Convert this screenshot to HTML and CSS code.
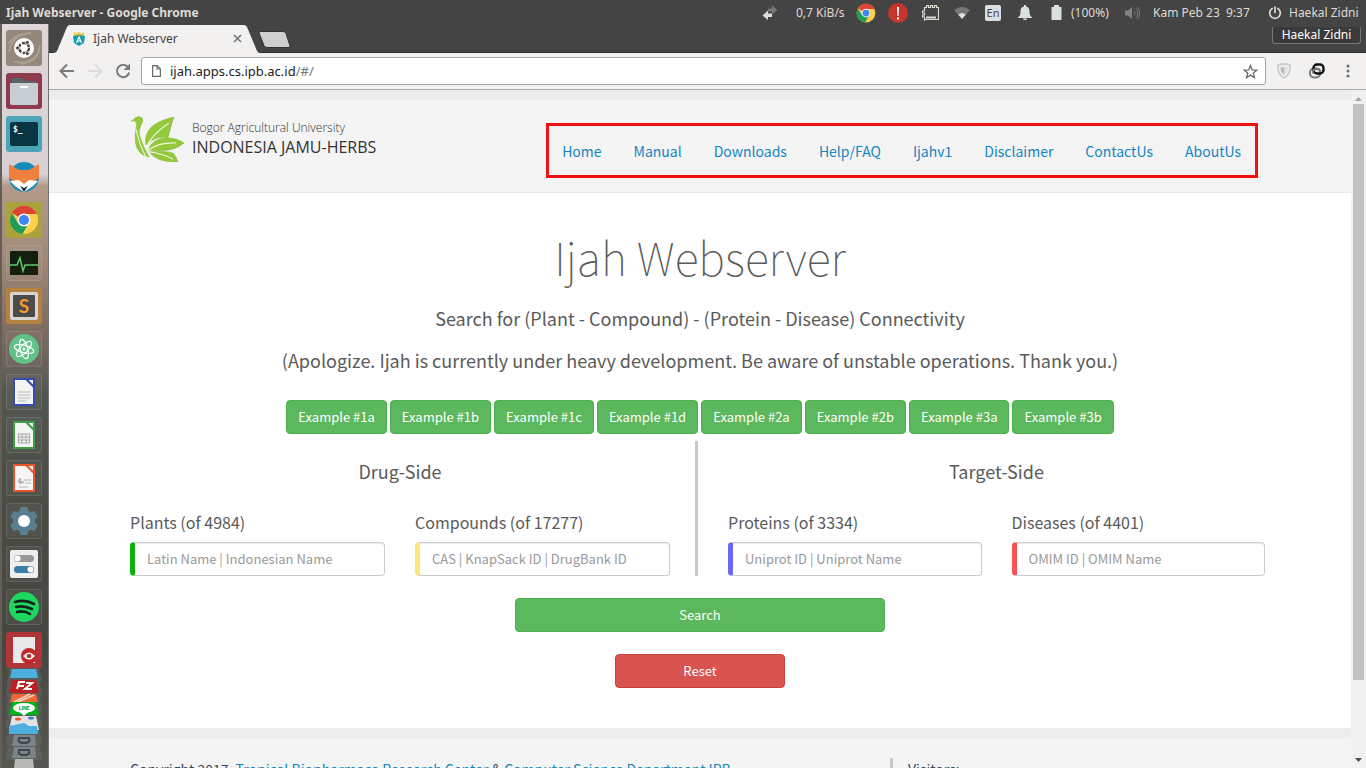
FILE: index.html
```html
<!DOCTYPE html>
<html lang="en">
<head>
<meta charset="utf-8">
<title>Ijah Webserver</title>
<link rel="stylesheet" href="styles.css">
</head>
<body>
<svg class="defs" width="0" height="0" aria-hidden="true">
  <symbol id="chrome" viewBox="0 0 32 32">
    <circle cx="16" cy="16" r="15" fill="#fdd04b"/>
    <path d="M16 16 3 8.500A15 15 0 0 1 29.500 9.500H16z" fill="#db4437"/>
    <path d="M3 8.500A15 15 0 0 0 14.500 31L20 21 16 16 9.500 19z" fill="#1f9d58"/>
    <path d="M3 8.500 16 9.500H29.500A15 15 0 0 0 3 8.500z" fill="#db4437"/>
    <circle cx="16" cy="16" r="7" fill="#f3f3f3"/>
    <circle cx="16" cy="16" r="5.400" fill="#4285f4"/>
  </symbol>
</svg>
<div class="desktop">
  <header class="panel">
    <span class="panel-title">Ijah Webserver - Google Chrome</span>
    <div class="indicators">
      <svg class="ind-net" width="16" height="16" viewBox="0 0 16 16"><path d="M6 3.500h4V.5L15.500 5 10 9.500v-3H6z" fill="#777672"/><path d="M10 8.500H6v-3L.5 10.500 6 15v-3h4z" fill="#dadfe1"/></svg>
      <span class="ind-speed">0,7 KiB/s</span>
      <svg class="ind-chrome" width="20" height="20"><use href="#chrome"/></svg>
      <svg class="ind-alert" width="20" height="20" viewBox="0 0 20 20"><circle cx="10" cy="10" r="10" fill="#c6352d"/><path d="M9 4h2l-.4 9H9.400zM9 14.500h2v2H9z" fill="#fff"/></svg>
      <svg class="ind-note" width="17" height="17" viewBox="0 0 17 17" fill="none" stroke="#dfdbd2"><path d="M2.500 16v-3H.5v-2h2V9H.5V7h2V3.500h2v-2h2v2h2v-2h2v2h2v-2h2v2h2V15.500h-13z" stroke-width="1.200"/><path d="M4 13.500h10" stroke-width="2"/></svg>
      <svg class="ind-wifi" width="16" height="12" viewBox="0 0 16 12"><path d="M0 3Q8-3 16 3L8 12z" fill="#777672"/><path d="M4.200 7.500Q8 4.500 11.800 7.500L8 12z" fill="#dadfe1"/></svg>
      <span class="ind-lang">En</span>
      <svg class="ind-bell" width="14" height="15" viewBox="0 0 14 15" fill="#dadfe1"><path d="M6 0h2v1.500c3 .5 3.500 3 3.500 5 0 3 .5 4 2.500 6v.5H0v-.5c2-2 2.500-3 2.500-6 0-2 .5-4.500 3.500-5zM5 13.500h4c0 2-4 2-4 0z"/></svg>
      <svg class="ind-battery" width="11" height="15" viewBox="0 0 11 15" fill="#dadfe1"><path d="M3 0h5v2h2.500v13H.5V2H3z"/></svg>
      <span class="ind-percent">(100%)</span>
      <svg class="ind-volume" width="15" height="14" viewBox="0 0 15 14"><path d="M0 4.500h3L7 1v12L3 9.500H0z" fill="#85837f"/><path d="M9 4.500q2 2.500 0 5M11 2.500q3.500 4.500 0 9M12.500.8q4 6 0 12.400" fill="none" stroke="#777672"/></svg>
      <time class="ind-date">Kam Peb 23&nbsp; 9:37</time>
      <svg class="ind-power" width="14" height="14" viewBox="0 0 14 14" fill="none" stroke="#dfdbd2" stroke-width="1.700" stroke-linecap="round"><path d="M4.200 2.500a5.300 5.300 0 1 0 5.600 0M7 1v5.500"/></svg>
      <span class="ind-user">Haekal Zidni</span>
    </div>
  </header>

  <aside class="launcher" aria-label="Launcher">
    <div class="tile tile-dash"><svg viewBox="0 0 36 36"><path d="M3 22Q6 4 25 3M8 32Q32 35 34 15M2 14Q10 4 18 4M14 34Q28 32 31 25" fill="none" stroke="#aa9d91" stroke-width="2"/><circle cx="18" cy="18" r="10" fill="#fff"/><circle cx="18" cy="18" r="5" fill="none" stroke="#51453f" stroke-width="2.400" stroke-dasharray="9 1.470"/><g fill="#51453f" stroke="#fff" stroke-width=".8"><circle cx="11.500" cy="18" r="2"/><circle cx="21.300" cy="12.400" r="2"/><circle cx="21.300" cy="23.600" r="2"/></g></svg></div>
    <div class="tile tile-files"><svg viewBox="0 0 36 36"><path d="M6 10V6q0-1 1-1h8l4 3h9q2 0 2 2v4H6z" fill="#56666b"/><path d="M4 11q0-1 1-1h26q1 0 1 1v19q0 2-2 2H6q-2 0-2-2z" fill="#c7cdd0"/><path d="M14 13h8v2h-8z" fill="#fff"/></svg></div>
    <div class="tile tile-terminal"><svg viewBox="0 0 36 36"><rect x="4" y="6" width="28" height="24" rx="2" fill="#073642"/><text x="7" y="16" class="term-text">$_</text></svg></div>
    <div class="tile"><svg viewBox="0 0 36 36"><circle cx="18" cy="18" r="15" fill="#178bbb"/><path d="M3 5l10 6h10l10-6 0 14-4 2 2 1-4 2-9 9-9-9-4-2 2-1-4-2z" fill="#f07f3c"/><path d="M4 22l9-1 5 4 5-4 9 1-5 5-9 6-9-6z" fill="#fff"/><path d="M14 27l4 2 4-2-4 6z" fill="#252b38"/></svg></div>
    <div class="tile tile-chrome"><svg viewBox="0 0 36 36"><use href="#chrome" x="3" y="3" width="30" height="30"/></svg></div>
    <div class="tile framed"><svg viewBox="0 0 36 36"><rect x="4" y="6" width="28" height="24" rx="1" fill="#14200f"/><path d="M4 20h7l3-7 3 13 2-6h13" fill="none" stroke="#62c56d" stroke-width="1.500"/></svg></div>
    <div class="tile tile-sublime"><svg viewBox="0 0 36 36"><rect x="4" y="4" width="28" height="28" rx="2" fill="#d7d5d1"/><rect x="7" y="7" width="22" height="22" rx="1" fill="#4b4b4b"/><text x="18" y="25" text-anchor="middle" class="sublime-text">S</text></svg></div>
    <div class="tile framed"><svg viewBox="0 0 36 36"><circle cx="18" cy="18" r="15" fill="#61c287"/><g fill="none" stroke="#fff" stroke-width="1.200"><ellipse cx="18" cy="18" rx="10" ry="3.800" transform="rotate(15 18 18)"/><ellipse cx="18" cy="18" rx="10" ry="3.800" transform="rotate(75 18 18)"/><ellipse cx="18" cy="18" rx="10" ry="3.800" transform="rotate(135 18 18)"/></g><circle cx="18" cy="18" r="1.500" fill="#fff"/></svg></div>
    <div class="tile framed"><svg viewBox="0 0 36 36"><path d="M8 5h20v26H8z" fill="#f4f4f4" stroke="#354bb2" stroke-width="2"/><path d="M20 5h8v8z" fill="#f4f4f4" stroke="#354bb2" stroke-width="2"/><path d="M12 18h12M12 21h12M12 24h12M12 27h8" stroke="#b8b8b8"/></svg></div>
    <div class="tile framed"><svg viewBox="0 0 36 36"><path d="M8 5h20v26H8z" fill="#f4f4f4" stroke="#3e9b46" stroke-width="2"/><path d="M20 5h8v8z" fill="#f4f4f4" stroke="#3e9b46" stroke-width="2"/><path d="M12.500 17h11v9h-11zM12.500 20h11M12.500 23h11M16 17v9M20 17v9" fill="none" stroke="#a8a8a8"/></svg></div>
    <div class="tile framed"><svg viewBox="0 0 36 36"><path d="M8 5h20v26H8z" fill="#f4f4f4" stroke="#e4572c" stroke-width="2"/><path d="M20 5h8v8z" fill="#f4f4f4" stroke="#e4572c" stroke-width="2"/><path d="M15 18a3 3 0 1 0 3 3h-3z" fill="#b8b8b8"/><path d="M18 20h7M19 23h6M13 27h9" stroke="#b8b8b8"/></svg></div>
    <div class="tile framed"><svg viewBox="0 0 36 36"><g fill="#5b7f91"><circle cx="18" cy="18" r="11"/><rect x="14" y="4" width="8" height="28" rx="1.500"/><rect x="14" y="4" width="8" height="28" rx="1.500" transform="rotate(60 18 18)"/><rect x="14" y="4" width="8" height="28" rx="1.500" transform="rotate(120 18 18)"/></g><circle cx="18" cy="18" r="6" fill="#fff"/></svg></div>
    <div class="tile framed"><svg viewBox="0 0 36 36"><rect x="4" y="4" width="28" height="28" rx="2" fill="#eee"/><rect x="8" y="9" width="20" height="7" rx="3.500" fill="#999"/><circle cx="11.500" cy="12.500" r="3" fill="#fff"/><rect x="8" y="20" width="20" height="7" rx="3.500" fill="#3a7ca5"/><circle cx="24.500" cy="23.500" r="3" fill="#fff"/></svg></div>
    <div class="tile framed"><svg viewBox="0 0 36 36"><circle cx="18" cy="18" r="15" fill="#1ed760"/><path d="M9 13q10-3 19 2M10 18q8-2 16 2M11 23q7-2 13 2" fill="none" stroke="#14241a" stroke-width="2.600" stroke-linecap="round"/></svg></div>
    <div class="tile tile-viewer"><svg viewBox="0 0 36 36"><path d="M7 5h22v26H7z" fill="#e9e9e9"/><circle cx="23" cy="24" r="8" fill="#c1272d"/><path d="M17 24q6-7 12 0-6 7-12 0z" fill="#fff"/><circle cx="23" cy="24" r="2.300" fill="#c1272d"/></svg></div>
    <svg class="folded" viewBox="0 0 36 101" preserveAspectRatio="xMidYMin slice">
      <path d="M3 0h30l3 12-2 4 2 10-2 4 2 12-2 4 2 12-2 4 2 12-2 4 2 14H0l2-14-2-4 2-12-2-4 2-12-2-4 2-12-2-4z" fill="#666b65" opacity=".5"/>
      <path d="M6 1h24l2 9H4z" fill="#4daee0"/>
      <path d="M6 12h24l3 13H3z" fill="#bd2024"/><path d="M11 21l2-7h6M12 18h6M20 15h6l-7 6h7" fill="none" stroke="#fff" stroke-width="2"/>
      <path d="M6 26h24l2 8H4z" fill="#ee6736"/><path d="M8 34l16-8M12 34l16-7" stroke="#f4d6c0" stroke-width="1.500"/>
      <path d="M6 34h24l3 13H3z" fill="#00b119"/><ellipse cx="18" cy="40" rx="11" ry="5" fill="#fff"/><path d="M14 44l4 4 4-4z" fill="#fff"/><text x="18" y="42" text-anchor="middle" class="line-text">LINE</text>
      <path d="M6 48h24l3 14H3z" fill="#e4e4e4"/><ellipse cx="12" cy="51" rx="3" ry="1.500" fill="#e8502c"/><ellipse cx="25" cy="50" rx="3" ry="1.500" fill="#3c7cc0"/><path d="M3 58l15-3 5 3h8l1 8H3z" fill="#4daee0"/>
      <path d="M8 67h21l1 11H6z" fill="#7d858a"/><path d="M13 70h10q2 5-5 5t-5-5z" fill="none" stroke="#3d444a" stroke-width="2"/>
      <path d="M8 79h21l1 11H6z" fill="#7d858a"/><path d="M13 82h10q2 5-5 5t-5-5z" fill="none" stroke="#3d444a" stroke-width="2"/>
      <path d="M9 91h18l1 10H8z" fill="#b9bab8"/>
    </svg>
  </aside>

  <section class="browser">
    <div class="tabstrip">
      <div class="tab">
        <svg class="tab-shape" width="211" height="29" viewBox="0 0 211 29" preserveAspectRatio="none" aria-hidden="true"><path d="M0 29h4q3 0 4-2L18 3q1-2 3-2h174q2 0 3 2l10 24q1 2 3 2z" fill="#f2f1f0"/></svg>
        <svg class="favicon" width="12" height="14" viewBox="0 0 12 14"><path d="M1 0l2.500 2L6 0l2.500 2L11 0v5H1z" fill="#f4c430"/><path d="M0 4l6-1 6 1-1 7-5 3-5-3z" fill="#169db0"/><path d="M3.500 11L6 5l2.500 6M4.500 9h3" fill="none" stroke="#fff" stroke-width="1.100"/></svg>
        <span class="tab-title">Ijah Webserver</span>
        <button class="tab-close" aria-label="Close tab"><svg width="9" height="9" viewBox="0 0 9 9"><path d="M1 1l7 7M8 1L1 8" stroke="#777" stroke-width="1.600"/></svg></button>
      </div>
      <button class="new-tab" aria-label="New tab"><svg width="33" height="17" viewBox="0 0 33 17"><path d="M2 .5h23q2 0 3 2L32 15q0 1.500-1 1.500H9q-2 0-3-2L1 2Q1 .5 2 .5z" fill="#cfcecd" stroke="#333"/></svg></button>
      <button class="profile">Haekal Zidni</button>
    </div>

    <div class="toolbar">
      <button aria-label="Back"><svg width="16" height="16" viewBox="0 0 16 16" fill="none" stroke="#7a7a7a" stroke-width="2"><path d="M15 8H2M8 1.500L1.500 8 8 14.500"/></svg></button>
      <button aria-label="Forward"><svg width="16" height="16" viewBox="0 0 16 16" fill="none" stroke="#dcdbda" stroke-width="2"><path d="M1 8h13M8 1.500L14.500 8 8 14.500"/></svg></button>
      <button aria-label="Reload"><svg width="16" height="16" viewBox="0 0 16 16"><path d="M13 4a6.200 6.200 0 1 0 1.200 5.500" fill="none" stroke="#7a7a7a" stroke-width="2"/><path d="M15 .5v6.500H8.500z" fill="#7a7a7a"/></svg></button>
      <div class="omnibox">
        <svg width="9" height="12" viewBox="0 0 9 12" fill="none" stroke="#6b6b6b" stroke-width="1.200"><path d="M.6.600h4.600L8.400 4v7.400H.6zM5 .6V4h3.400"/></svg>
        <p class="url">ijah.apps.cs.ipb.ac.id<span>/#/</span></p>
        <button aria-label="Bookmark"><svg width="15" height="15" viewBox="0 0 15 15" fill="none" stroke="#6b6b6b" stroke-width="1.300"><path d="M7.500 1.500l1.700 4.300 4.600.3-3.500 3 1.100 4.400-3.900-2.400-3.900 2.400 1.100-4.400-3.500-3 4.600-.3z"/></svg></button>
      </div>
      <div class="extensions">
        <button aria-label="Shield"><svg width="16" height="16" viewBox="0 0 16 16"><path d="M8 1q3.500 0 6 .8Q15 11 8 15 1 11 2 1.800 4.500 1 8 1z" fill="#eee" stroke="#c4c4c4" stroke-width="1.300"/><path d="M8 4q2 0 3.500.5Q11.500 9 8 12z" fill="#ddd"/><path d="M8 4q-2 0-3.500.5Q4.500 9 8 12z" fill="#bbb"/></svg></button>
        <button aria-label="Link"><svg width="17" height="16" viewBox="0 0 17 16" fill="none" stroke-width="2"><rect x="2" y="5.500" width="10" height="9" rx="4" stroke="#777"/><rect x="5.500" y="1.500" width="10" height="9" rx="3.500" stroke="#111" stroke-width="2.400"/><path d="M5 10.500V9q0-3 3-3h2q2 0 2 2.500" stroke="#777"/></svg></button>
        <button aria-label="Menu"><svg width="4" height="14" viewBox="0 0 4 14" fill="#6b6b6b"><circle cx="2" cy="2" r="1.500"/><circle cx="2" cy="7" r="1.500"/><circle cx="2" cy="12" r="1.500"/></svg></button>
      </div>
    </div>

    <div class="viewport">
      <div class="page">
        <header class="site-header">
          <div class="container header-row">
            <a class="brand" href="#/">
              <svg width="54" height="46" viewBox="0 0 54 46"><g fill="#93c93a" stroke="#7fb531" stroke-width=".5"><path d="M0 5q3-1 4-3 4-3 7 0 2 3-1 7-3 6-1 12 3 9 9 20-8-1-12-9-3-7-1-19 1-5 0-7-2-2-5-1z"/><path d="M15 29Q11 8 43 1 40 9 37 22 25 19 15 29z"/><path d="M17 34q5-12 19-12 10 0 17 5-10 10-36 7z"/><path d="M18 36q14-2 24 1 3 3 5 9-20 1-29-10z"/></g><path d="M15 32Q20 19 38 7M17 34q12-8 28-7M18 36q12 1 24 7M5 13q3 15 10 28" stroke="#f0f8e4" fill="none" stroke-width="1.100"/></svg>
              <span class="brand-text"><small>Bogor Agricultural University</small><b>INDONESIA JAMU-HERBS</b></span>
            </a>
            <nav class="site-nav">
              <a href="#home">Home</a><a href="#manual">Manual</a><a href="#downloads">Downloads</a><a href="#help">Help/FAQ</a><a href="#v1">Ijahv1</a><a href="#disclaimer">Disclaimer</a><a href="#contact">ContactUs</a><a href="#about">AboutUs</a>
            </nav>
          </div>
        </header>

        <main class="main">
          <div class="container">
            <h1>Ijah Webserver</h1>
            <p class="lead">Search for (Plant - Compound) - (Protein - Disease) Connectivity</p>
            <p class="lead">(Apologize. Ijah is currently under heavy development. Be aware of unstable operations. Thank you.)</p>
            <div class="examples">
              <button class="btn">Example #1a</button><button class="btn">Example #1b</button><button class="btn">Example #1c</button><button class="btn">Example #1d</button><button class="btn">Example #2a</button><button class="btn">Example #2b</button><button class="btn">Example #3a</button><button class="btn">Example #3b</button>
            </div>
            <form>
              <div class="sides">
                <section class="side side-drug">
                  <h2>Drug-Side</h2>
                  <div class="fields">
                    <div class="field"><label for="plants">Plants (of 4984)</label><input id="plants" class="plants" type="text" placeholder="Latin Name | Indonesian Name"></div>
                    <div class="field"><label for="compounds">Compounds (of 17277)</label><input id="compounds" class="compounds" type="text" placeholder="CAS | KnapSack ID | DrugBank ID"></div>
                  </div>
                </section>
                <section class="side side-target">
                  <h2>Target-Side</h2>
                  <div class="fields">
                    <div class="field"><label for="proteins">Proteins (of 3334)</label><input id="proteins" class="proteins" type="text" placeholder="Uniprot ID | Uniprot Name"></div>
                    <div class="field"><label for="diseases">Diseases (of 4401)</label><input id="diseases" class="diseases" type="text" placeholder="OMIM ID | OMIM Name"></div>
                  </div>
                </section>
              </div>
              <div class="actions">
                <button class="btn btn-search" type="button">Search</button>
                <button class="btn btn-reset" type="reset">Reset</button>
              </div>
            </form>
          </div>
        </main>

        <footer class="site-footer">
          <div class="container footer-row">
            <p>Copyright 2017, <a href="#trop">Tropical Biopharmaca Research Center</a> &amp; <a href="#cs">Computer Science Department IPB</a></p>
            <p class="visitors">Visitors:</p>
          </div>
        </footer>
      </div>
      <div class="scrollbar" aria-hidden="true">
        <svg width="9" height="5" viewBox="0 0 9 5"><path d="M1 5l3.500-4L8 5z" fill="#a3a3a3"/></svg>
        <div class="track"><div class="thumb"></div></div>
        <svg width="9" height="5" viewBox="0 0 9 5"><path d="M1 0l3.500 4L8 0z" fill="#505050"/></svg>
      </div>
    </div>
  </section>
</div>
</body>
</html>
```
FILE: styles.css
```css
:root {
  --ui: "Noto Sans", "Open Sans", sans-serif;
  --site: "Noto Sans CJK SC", "Noto Sans CJK JP", "Noto Sans", sans-serif;
}
* { box-sizing: border-box; }
body { margin: 0; overflow: hidden; }
h1, h2, p { margin: 0; font-weight: 400; }
button { border: 0; background: none; padding: 0; font: inherit; color: inherit; }
a { color: #1585c0; text-decoration: none; }
svg { display: block; flex: none; }
.defs { position: absolute; }

.desktop {
  display: grid;
  grid-template: 24px minmax(0, 1fr) / 49px minmax(0, 1fr);
  height: 100vh;
  background: #444;
}

/* Top panel */
.panel {
  grid-column: 1 / -1;
  display: flex;
  align-items: center;
  justify-content: space-between;
  padding: 1px 4px 0 6px;
  background: #444;
  color: #dfdbd2;
  font: 12px/23px var(--ui);
}
.panel-title { font-size: 12px; font-weight: 700; }
.indicators { display: flex; align-items: center; white-space: nowrap; }
.ind-speed { width: 50px; margin: 0 10px 0 18px; }
.ind-alert { margin: 0 14px 0 12px; }
.ind-wifi { margin: 0 15px; }
.ind-lang { width: 16px; border-radius: 2px; background: #dadfe1; color: #444; font-size: 11px; line-height: 16px; text-align: center; }
.ind-bell { margin: 0 19px 0 17px; }
.ind-percent { width: 41px; margin: 0 13px 0 9px; }
.ind-date { width: 100px; margin: 0 15px 0 13px; }
.ind-user { width: 73px; margin-left: 7px; }

/* Launcher */
.launcher {
  display: flex;
  flex-direction: column;
  align-items: center;
  gap: 7px;
  padding: 6px 3px 0 0;
  border-left: 2px solid #655e57;
  border-right: 1px solid #77716d;
  overflow: hidden;
  background: linear-gradient(#ddd7da 0, #d8d1d3 150px, #b39b89 162px, #a18a79 230px, #826f62 300px, #66605a 345px, #51564f 370px, #4a4c45 480px, #454640 620px, #555850 744px);
}
.tile { flex: none; width: 36px; height: 36px; border-radius: 3px; }
.framed { border: 1px solid #ffffff1c; background: #ffffff0a; }
.framed svg { margin: -1px; width: 36px; height: 36px; }
.tile-dash { background: #94877b; }
.tile-files { background: #8e3c4d; }
.tile-terminal { background: #4ba3b8; }
.tile-chrome { background: #aaa23c; }
.tile-sublime { background: #b3823e; }
.tile-viewer { background: #b13538; }
.folded { width: 36px; height: 101px; margin-top: -7px; }
.term-text { font: 700 8px "DejaVu Sans Mono", monospace; fill: #fff; }
.sublime-text { font: 700 19px Lato, sans-serif; fill: #f79a2b; }
.line-text { font: 700 5px Roboto, sans-serif; fill: #00a018; }

/* Browser frame */
.browser { display: flex; flex-direction: column; min-width: 0; overflow: hidden; }
.tabstrip { display: flex; flex: none; height: 29px; border-bottom: 1px solid #2f2f2f; padding-right: 5px; }
.tab { position: relative; display: flex; align-items: center; width: 211px; height: 29px; padding: 0 18px 0 24px; font: 12px/29px var(--ui); color: #444; }
.tab-shape { position: absolute; inset: 0; }
.favicon, .tab-title, .tab-close { position: relative; }
.tab-title { flex: 1; margin-left: 8px; }
.new-tab { align-self: flex-start; margin: 7px 0 0 -2px; }
.profile { align-self: flex-start; margin: 2px 0 0 auto; width: 89px; height: 18px; border: 1px solid #777; border-top-color: #444; border-radius: 3px; background: #3a3a3a; color: #fff; font: 12px/16px var(--ui); }
.toolbar { display: flex; flex: none; align-items: center; gap: 12px; height: 37px; padding: 0 16px 0 10px; border-bottom: 1px solid #a9a9a9; background: #f2f1f0; }
.omnibox { display: flex; flex: 1; align-items: center; gap: 9px; height: 28px; margin-left: -2px; padding: 0 7px 0 10px; border: 1px solid #a5a5a5; border-radius: 3px; background: #fff; font: 13px/26px var(--ui); color: #222; }
.url { flex: 1; }
.url span { color: #777; }
.extensions { display: flex; align-items: center; gap: 16px; margin-left: -2px; }
.extensions button:last-child { margin-left: 5px; }

/* Page viewport */
.viewport { display: flex; flex: 1; min-height: 0; }
.page { flex: 1; overflow: hidden; background: #fff; color: #5a5a5a; font-family: var(--site); }
.container { max-width: 1170px; margin: 0 auto; padding: 0 15px; }
.scrollbar { display: flex; flex-direction: column; align-items: center; gap: 3px; width: 15px; padding: 6px 0 5px; background: #f1f1f1; }
.track { flex: 1; width: 11px; }
.thumb { height: 88.500%; background: #c1c1c1; }

.site-header { border-top: 10px solid #ededed; border-bottom: 1px solid #e9e9e9; background: #f4f4f4; }
.header-row { display: flex; align-items: flex-start; justify-content: space-between; height: 92px; }
.brand { display: flex; gap: 7px; margin-top: 16px; padding-left: 1px; color: #333; font-family: "Open Sans", sans-serif; white-space: nowrap; }
.brand-text { display: flex; flex-direction: column; padding-top: 3px; }
.brand-text small { font-size: 12px; font-weight: 300; line-height: 18px; }
.brand-text b { font-size: 16px; font-weight: 400; line-height: 21px; }
.site-nav { display: flex; gap: 32px; margin: 23px 12px 0 0; border: 3px solid #f01010; padding: 2px 14px 0 13px; font-size: 14px; line-height: 47px; }

/* Main search area */
.main { padding: 29px 0 40px; text-align: center; }
h1 { font-size: 45px; font-weight: 100; line-height: 70px; margin-bottom: 11px; }
.lead { font-size: 18px; line-height: 30px; margin-bottom: 12px; }
.examples { display: flex; flex-wrap: wrap; justify-content: center; gap: 3px; padding: 13px 0 7px; }
.btn { height: 34px; padding: 0 11px; border: 1px solid #4cae4c; border-radius: 4px; background: #5cb85c; color: #fff; font-size: 13px; line-height: 32px; }
.sides { display: grid; grid-template-columns: 565fr 570fr; padding-right: 5px; }
.side { padding-top: 15px; }
.side-drug { padding-right: 25px; }
.side-target { border-left: 3px solid #c8c8c8; padding-left: 30px; }
h2 { font-size: 18px; line-height: 30px; margin-bottom: 24px; }
.fields { display: grid; grid-template-columns: 1fr 1fr; gap: 30px; text-align: left; }
.field { display: flex; flex-direction: column; min-width: 0; }
label { font-size: 16px; line-height: 24px; margin-bottom: 8px; }
input { width: 100%; height: 34px; padding: 0 12px 2px; border: 1px solid #ccc; border-left-width: 5px; border-radius: 4px; background: #fff; color: #555; font: 13px/30px var(--site); box-shadow: inset 0 1px 1px #00000013; }
input::placeholder { color: #999; opacity: 1; }
.plants { border-left-color: #0bb00b; }
.compounds { border-left-color: #ffe57a; }
.proteins { border-left-color: #6a68f5; }
.diseases { border-left-color: #f95252; }
.actions { display: flex; flex-direction: column; align-items: center; gap: 22px; padding-top: 22px; }
.btn-search { width: 100%; max-width: 370px; }
.btn-reset { width: 170px; border-color: #c9423e; background: #d9534f; }

.site-footer { border-top: 10px solid #ededed; background: #f4f4f4; color: #34495e; }
.footer-row { display: grid; grid-template-columns: 760fr 380fr; padding-top: 20px; font-size: 14px; line-height: 22px; }
.visitors { border-left: 3px solid #c8c8c8; padding-left: 15px; min-height: 60px; }
```
